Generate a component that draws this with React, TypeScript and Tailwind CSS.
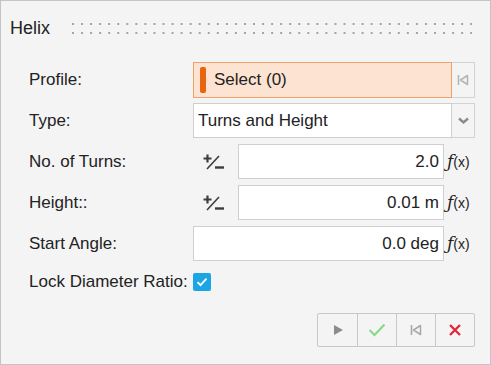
import React from "react";

const font = "font-['Liberation_Sans',Arial,sans-serif]";

const dots = Array.from({ length: 45 }, (_, i) => i * 9.05);

function Grip() {
  return (
    <svg width="400" height="14" viewBox="0 0 400 14" aria-hidden="true">
      {dots.map((x) => (
        <g key={x} fill="#a4a4a4">
          <rect x={x} y="1" width="2" height="2" />
          <rect x={x} y="10" width="2" height="2" />
        </g>
      ))}
    </svg>
  );
}

function PlusMinus() {
  return (
    <svg width="23" height="16" viewBox="0 0 23 16" aria-hidden="true">
      <path d="M4.5 0.5v8M0.5 4.5h8" stroke="#3c3c3c" strokeWidth="2.2" />
      <path d="M16 2L4 15" stroke="#3c3c3c" strokeWidth="1.6" />
      <path d="M12 13.5h9" stroke="#3c3c3c" strokeWidth="2.4" />
    </svg>
  );
}

function Fx() {
  return (
    <span className="w-[31px] pl-[3px] text-[17px] leading-none text-[#222] font-['DejaVu_Serif',serif]">
      <i>ƒ</i>
      <span className="font-['Liberation_Sans',sans-serif] text-[14px]">(x)</span>
    </span>
  );
}

function ResetIcon({ color = "#b4b4b4" }: { color?: string }) {
  return (
    <svg width="14" height="14" viewBox="0 0 14 14" aria-hidden="true">
      <path d="M2.5 2v10" stroke={color} strokeWidth="1.6" />
      <path d="M11.5 2.5L4.5 7l7 4.5z" fill="none" stroke={color} strokeWidth="1.5" strokeLinejoin="round" />
    </svg>
  );
}

function Row({ label, children, h = "h-[35px]" }: { label: string; children: React.ReactNode; h?: string }) {
  return (
    <div className={`flex ${h} items-center`}>
      <div className="w-[164px] text-[17px] text-[#222]">{label}</div>
      <div className="flex h-full w-[282px] items-center">{children}</div>
    </div>
  );
}

function NumberField({ value, spinner }: { value: string; spinner?: boolean }) {
  return (
    <>
      {spinner && (
        <div className="flex w-[45px] items-center pl-[10px]">
          <PlusMinus />
        </div>
      )}
      <div className="flex h-full flex-1 items-center justify-end border border-[#cfcfcf] bg-white pr-[4px] text-[17px] text-[#222]">
        {value}
      </div>
      <Fx />
    </>
  );
}

export default function App() {
  return (
    <div className={`${font} flex h-[365px] w-[491px] flex-col border border-[#c4c4c4] bg-[#f4f4f4]`}>
      <div className="flex h-[39px] items-end gap-[22px] pl-[9px]">
        <span className="text-[18px] leading-[24px] text-[#222]">Helix</span>
        <div className="pb-[4px]">
          <Grip />
        </div>
      </div>

      <div className="mt-[22px] flex flex-col gap-[6px] pl-[28px]">
        <Row label="Profile:">
          <div className="flex h-[36px] flex-1 items-center gap-[8px] border border-[#f0a06c] bg-[#fde3d1] pl-[6px]">
            <span className="h-[26px] w-[6px] rounded-[2px] bg-[#e8640f]" />
            <span className="text-[17px] text-[#222]">Select (0)</span>
          </div>
          <div className="flex h-[36px] w-[23px] items-center justify-center border border-l-0 border-[#d2d2d2] bg-[#f4f4f4]">
            <ResetIcon />
          </div>
        </Row>

        <Row label="Type:">
          <div className="flex h-full flex-1 items-center border border-[#cfcfcf] bg-white pl-[4px] text-[17px] text-[#222]">
            Turns and Height
          </div>
          <div className="flex h-full w-[23px] items-center justify-center border border-l-0 border-[#d2d2d2] bg-[#f4f4f4]">
            <svg width="11" height="8" viewBox="0 0 11 8" aria-hidden="true">
              <path d="M1 1.5l4.5 4 4.5-4" fill="none" stroke="#8a8a8a" strokeWidth="2.4" />
            </svg>
          </div>
        </Row>

        <Row label="No. of Turns:">
          <NumberField value="2.0" spinner />
        </Row>

        <Row label="Height::">
          <NumberField value="0.01 m" spinner />
        </Row>

        <Row label="Start Angle:">
          <NumberField value="0.0 deg" />
        </Row>

        <Row label="Lock Diameter Ratio:" h="h-[30px]">
          <span className="flex h-[18px] w-[18px] items-center justify-center rounded-[2px] bg-[#1ba5e4]">
            <svg width="12" height="10" viewBox="0 0 12 10" aria-hidden="true">
              <path d="M1.5 5.2l3 3 6-6.5" fill="none" stroke="#fff" strokeWidth="1.8" />
            </svg>
          </span>
        </Row>
      </div>

      <div className="mt-[16px] flex justify-end pr-[15px]">
        <div className="flex h-[34px] rounded-[2px] border border-[#c8c8c8] bg-[#f4f4f4]">
          <button type="button" className="flex w-[40px] items-center justify-center border-r border-[#c8c8c8]">
            <svg width="12" height="12" viewBox="0 0 12 12" aria-hidden="true">
              <path d="M2 1l9 5-9 5z" fill="#8c8c8c" />
            </svg>
          </button>
          <button type="button" className="flex w-[39px] items-center justify-center border-r border-[#c8c8c8]">
            <svg width="18" height="14" viewBox="0 0 18 14" aria-hidden="true">
              <path d="M1.5 7l5 5L16.5 1.5" fill="none" stroke="#86d886" strokeWidth="2" />
            </svg>
          </button>
          <button type="button" className="flex w-[39px] items-center justify-center border-r border-[#c8c8c8]">
            <ResetIcon color="#a8a8a8" />
          </button>
          <button type="button" className="flex w-[38px] items-center justify-center">
            <svg width="14" height="14" viewBox="0 0 14 14" aria-hidden="true">
              <path d="M2 2l10 10M12 2L2 12" stroke="#e02a3c" strokeWidth="2.4" />
            </svg>
          </button>
        </div>
      </div>
    </div>
  );
}
